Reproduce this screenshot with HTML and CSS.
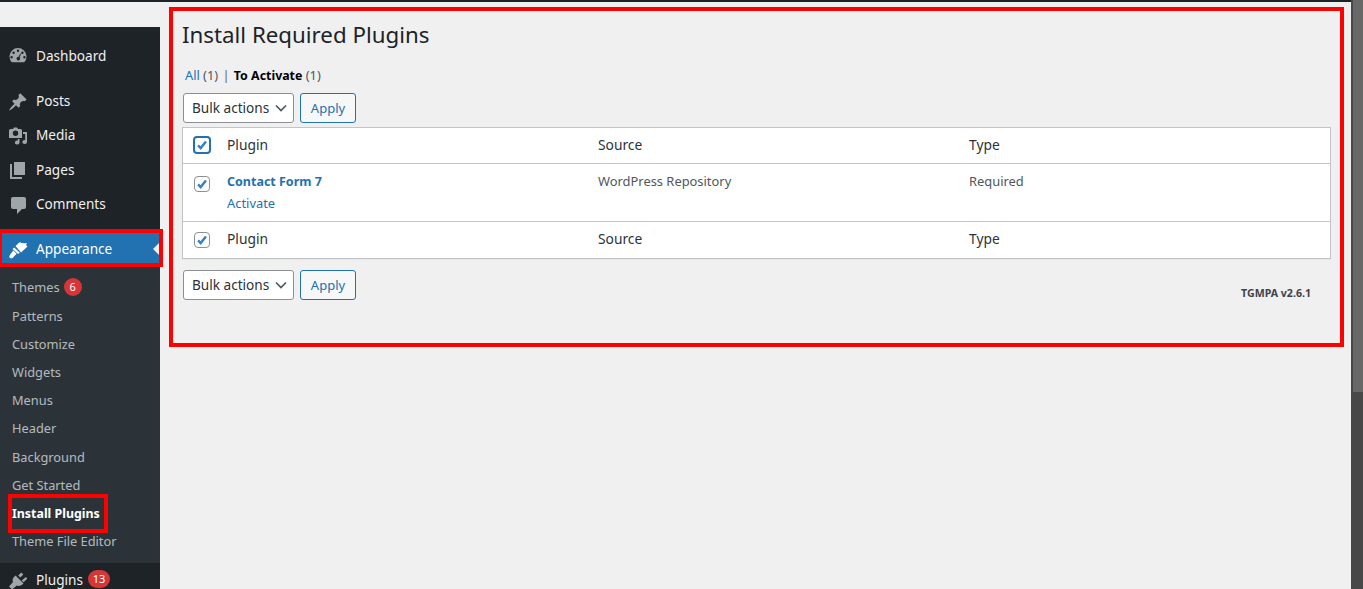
FILE: index.html
```html
<!DOCTYPE html>
<html lang="en">
<head>
<meta charset="utf-8">
<title>Install Required Plugins</title>
<link rel="stylesheet" href="styles.css">
</head>
<body>
<div class="topline"></div>
<div class="layout">
  <nav class="sidebar">
    <ul class="menu">
      <li class="item"><svg class="icon" viewBox="0 0 20 20"><path d="M3.76 16.24A8.5 8.5 0 1 1 16.24 16.24Z M10 3.6a1.2 1.2 0 1 0 0 2.4a1.2 1.2 0 0 0 0-2.4Z M5.6 5.6a1.2 1.2 0 1 0 0 2.4a1.2 1.2 0 0 0 0-2.4Z M14.4 5.6a1.2 1.2 0 1 0 0 2.4a1.2 1.2 0 0 0 0-2.4Z M3.6 10a1.2 1.2 0 1 0 0 2.4a1.2 1.2 0 0 0 0-2.4Z M16.4 10a1.2 1.2 0 1 0 0 2.4a1.2 1.2 0 0 0 0-2.4Z M12.3 7.4L10.4 11a1.7 1.7 0 1 0 1.2.6L13 7.7Z" fill-rule="evenodd"/></svg>Dashboard</li>
      <li class="item gap"><svg class="icon" viewBox="0 0 20 20"><path d="M10.44 3.02l1.82-1.82l6.36 6.35l-1.83 1.82c-1.05-.68-2.48-.57-3.41.36l-.75.75c-.92.93-1.04 2.35-.35 3.41l-1.83 1.82l-2.41-2.41l-2.8 2.79c-.42.42-3.38 2.71-3.8 2.29s1.86-3.39 2.28-3.81l2.79-2.79L4.1 9.36l1.83-1.82c1.05.69 2.48.57 3.4-.36l.75-.75c.93-.92 1.05-2.35.36-3.41z"/></svg>Posts</li>
      <li class="item"><svg class="icon" viewBox="0 0 20 20"><path fill-rule="evenodd" d="M2.500 3H5l1-1.500h3L10 3h2.500A1.500 1.500 0 0 1 14 4.500V12H1V4.500A1.500 1.500 0 0 1 2.500 3Z M7.500 4.500a2.700 2.700 0 1 0 0 5.400a2.700 2.700 0 0 0 0-5.400Z"/><path d="M15 6h4v10a2.300 1.900 0 1 1-1.800-1.800V8H15Z M11.500 13V16.500a2.300 1.900 0 1 1-1.800-1.800V13Z"/></svg>Media</li>
      <li class="item"><svg class="icon" viewBox="0 0 20 20"><path d="M6 15V2h11v13Z M4 4v13h10v2H2.500A.5.5 0 0 1 2 18.500V4Z"/></svg>Pages</li>
      <li class="item"><svg class="icon" viewBox="0 0 20 20"><path d="M5 2h11a2 2 0 0 1 2 2v8a2 2 0 0 1-2 2h-2l-5 5v-5H5a2 2 0 0 1-2-2V4a2 2 0 0 1 2-2Z"/></svg>Comments</li>
      <li class="item gap active"><svg class="icon" viewBox="0 0 20 20"><path d="M7.500 6L11.500 2.300Q15 3.800 19 3L18 5L19.500 6.500L13 12.500Z M6.300 7.400L11.800 12.800L10 14L4.500 9Z M5.200 10.500L8.600 13.700L4.800 17.700Q3.200 19 1.800 17.700Q.8 16.300 2 15Z"/></svg>Appearance</li>
      <li class="submenu">
        <ul class="sublist">
          <li class="subitem">Themes<span class="badge">6</span></li>
          <li class="subitem">Patterns</li>
          <li class="subitem">Customize</li>
          <li class="subitem">Widgets</li>
          <li class="subitem">Menus</li>
          <li class="subitem">Header</li>
          <li class="subitem">Background</li>
          <li class="subitem">Get Started</li>
          <li class="subitem current">Install Plugins</li>
          <li class="subitem">Theme File Editor</li>
        </ul>
      </li>
      <li class="item"><svg class="icon" viewBox="0 0 20 20"><path d="M13.300 2.400L15.300 4.400L12.300 7.500L10.200 5.400Z M17.800 6.900L19.300 8.700L15.500 12.300L13.700 10.500Z M7.500 5.500L15.500 13.500C13.500 15.700 11 16.500 8.800 15.500L4 19.500L1 16.500L5 12C4 9.800 5 7.500 7.500 5.500Z"/></svg>Plugins<span class="badge wide">13</span></li>
    </ul>
  </nav>
  <main class="content">
    <h1 class="title">Install Required Plugins</h1>
    <p class="filters"><a class="link">All</a> <span class="count">(1)</span> <span class="sep">|</span> <strong>To Activate</strong> <span class="count">(1)</span></p>
    <div class="actions">
      <div class="select">Bulk actions<svg class="chevron" viewBox="0 0 12 8"><path d="M1 1.500l5 5l5-5"/></svg></div>
      <div class="button">Apply</div>
    </div>
    <div class="table">
      <div class="row head">
        <div class="check"><span class="box large"><svg viewBox="0 0 16 16"><path d="M3.500 8.500l3 3l6-7.500"/></svg></span></div>
        <div class="cell">Plugin</div><div class="cell">Source</div><div class="cell">Type</div>
      </div>
      <div class="row body">
        <div class="check"><span class="box"><svg viewBox="0 0 16 16"><path d="M3.500 8.500l3 3l6-7.500"/></svg></span></div>
        <div class="cell small"><strong class="link name">Contact Form 7</strong><a class="link action">Activate</a></div>
        <div class="cell small muted">WordPress Repository</div>
        <div class="cell small muted">Required</div>
      </div>
      <div class="row foot">
        <div class="check"><span class="box"><svg viewBox="0 0 16 16"><path d="M3.500 8.500l3 3l6-7.500"/></svg></span></div>
        <div class="cell">Plugin</div><div class="cell">Source</div><div class="cell">Type</div>
      </div>
    </div>
    <div class="actions lower">
      <div class="select">Bulk actions<svg class="chevron" viewBox="0 0 12 8"><path d="M1 1.500l5 5l5-5"/></svg></div>
      <div class="button">Apply</div>
    </div>
    <p class="version">TGMPA v2.6.1</p>
  </main>
  <div class="scrollbar"><div class="thumb"></div></div>
</div>
<div class="mark mark-main"></div>
<div class="mark mark-appearance"></div>
<div class="mark mark-install"></div>
</body>
</html>
```
FILE: styles.css
```css
* { box-sizing: border-box; }
html, body { height: 100%; }
body {
  margin: 0;
  overflow: hidden;
  position: relative;
  background: #f0f0f1;
  color: #3c434a;
  font-family: "Noto Sans", sans-serif;
  font-size: 13px;
}
ul { list-style: none; margin: 0; padding: 0; }
p, h1 { margin: 0; }

.topline { height: 2px; margin-right: 12px; background: #1d2327; }
.layout { display: flex; height: 587px; }

.sidebar { flex: 0 0 160px; margin-top: 25px; background: #1d2327; overflow: hidden; }
.menu { padding-top: 12px; }
.item {
  display: flex;
  align-items: center;
  height: 34.300px;
  padding-left: 8px;
  padding-bottom: 1.500px;
  font-size: 13.600px;
  color: #f0f0f1;
  position: relative;
}
.item.gap { margin-top: 11px; }
.icon { width: 20px; height: 20px; margin: 2px 8px 0 0; flex: none; fill: #a0a5aa; }
.item.active { background: #2271b1; color: #fff; }
.item.active .icon { fill: #fff; }
.item.active::after {
  content: "";
  position: absolute;
  right: 0;
  top: 10px;
  border: 7px solid transparent;
  border-right-color: #f0f0f1;
  border-left-width: 0;
}
.submenu { background: #2c3338; padding: 7px 0; }
.subitem {
  display: flex;
  align-items: center;
  height: 28.200px;
  padding-left: 12px;
  padding-bottom: 1px;
  font-size: 12.800px;
  color: rgba(240, 246, 252, .7);
}
.subitem.current { color: #fff; font-weight: 700; font-size: 12.400px; padding-bottom: 0; }
.badge {
  width: 18px;
  height: 18px;
  margin-left: 4px;
  border-radius: 50%;
  background: #d63638;
  color: #fff;
  font-size: 11px;
  line-height: 18px;
  text-align: center;
}
.badge.wide { width: 22px; border-radius: 9px; margin-left: 5px; }

.content { flex: 1; min-width: 0; padding: 0 20px 0 22px; }
.title { margin-top: 17px; height: 31px; line-height: 31px; font-size: 22.300px; font-weight: 400; color: #1d2327; }
.filters { margin-top: 16px; margin-left: 3px; height: 18px; line-height: 18px; font-size: 12.800px; color: #646970; }
.filters strong { color: #000; font-weight: 700; font-size: 12.400px; }
.sep { margin: 0 1px; }
.count { color: #50575e; }
.link { color: #2271b1; }
.actions { display: flex; gap: 6px; margin-top: 9px; margin-left: 1px; }
.actions.lower { margin-top: 11px; }
.select {
  display: flex;
  align-items: center;
  justify-content: space-between;
  width: 111px;
  height: 30px;
  padding: 0 6px 2px 8px;
  background: #fff;
  border: 1px solid #8c8f94;
  border-radius: 3px;
  font-size: 13.600px;
  color: #2c3338;
}
.chevron { width: 12px; height: 8px; margin-top: 2px; fill: none; stroke: #50575e; stroke-width: 1.700; }
.button {
  display: flex;
  align-items: center;
  justify-content: center;
  width: 56px;
  height: 30px;
  padding-bottom: 1px;
  background: #f6f7f7;
  border: 1px solid #2271b1;
  border-radius: 3px;
  color: #2271b1;
}
.table { margin-top: 4px; background: #fff; border: 1px solid #c3c4c7; box-shadow: 0 1px 1px rgba(0, 0, 0, .04); }
.row { display: grid; grid-template-columns: 34px repeat(3, 1fr); }
.head { height: 36px; border-bottom: 1px solid #c3c4c7; align-items: center; }
.body { height: 57px; padding-top: 8px; }
.foot { height: 37px; border-top: 1px solid #c3c4c7; align-items: center; }
.head .cell { padding-bottom: 2px; }
.foot .cell { padding-bottom: 4px; }
.cell { padding-left: 10px; font-size: 13.800px; color: #2c3338; }
.cell.small { font-size: 12.900px; }
.muted { color: #50575e; }
.name { font-size: 12.500px; }
.action { display: block; margin-top: 4px; }
.check { display: flex; justify-content: center; padding-left: 4px; }
.box {
  display: block;
  width: 16px;
  height: 16px;
  background: #fff;
  border: 1px solid #8c8f94;
  border-radius: 4px;
}
.box.large { width: 18px; height: 18px; margin-top: -1px; border: 2px solid #2271b1; }
.box svg { display: block; width: 100%; height: 100%; fill: none; stroke: #3582c4; stroke-width: 2.800; }
.body .box { margin-top: 4px; }
.version { margin-top: -14px; padding-right: 20px; text-align: right; font-size: 10.600px; font-weight: 700; color: #3c434a; }

.scrollbar { flex: 0 0 12px; background: #484848; padding-left: 2px; margin-top: -2px; height: 589px; }
.thumb { height: 392px; background: #686868; }

.mark { position: absolute; border: 4px solid #ff0000; pointer-events: none; }
.mark-main { left: 169px; top: 7px; width: 1175px; height: 340px; }
.mark-appearance { left: 0; top: 229px; width: 163px; height: 38px; border-left-width: 2px; }
.mark-install { left: 8px; top: 494px; width: 100px; height: 39px; }
```
